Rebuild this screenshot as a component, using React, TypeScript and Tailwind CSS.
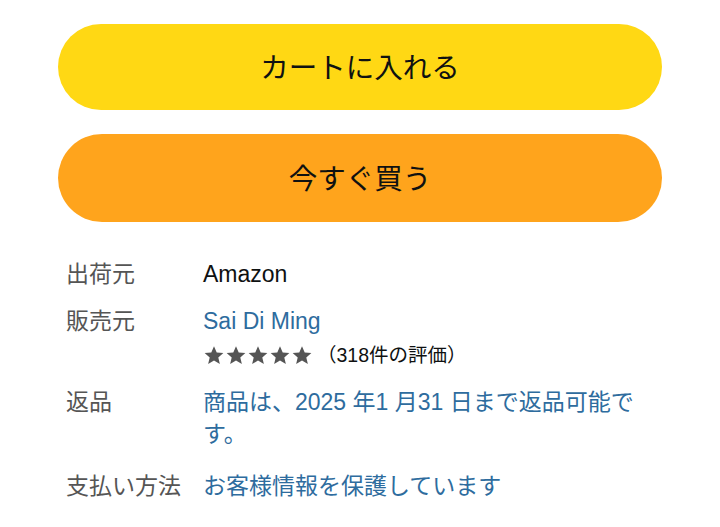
import React from "react";

const Star = () => (
  <svg width="22" height="21" viewBox="0 0 24 24" className="fill-[#555555]">
    <path d="M12 1.5l3.1 7 7.6.7-5.8 5 1.8 7.5L12 17.8l-6.7 3.9 1.8-7.5-5.8-5 7.6-.7z" />
  </svg>
);

export default function App() {
  const font = { fontFamily: "'Liberation Sans', 'Noto Sans CJK JP', sans-serif" };
  return (
    <div className="w-[720px] h-[527px] bg-white overflow-hidden" style={font}>
      <div className="px-[58px] pt-[24px] flex flex-col gap-[24px]">
        <button className="h-[86px] w-full rounded-full bg-[#FFD814] text-[#0F1111] text-[28.5px] pt-[3px]">
          カートに入れる
        </button>
        <button className="h-[88px] w-full rounded-full bg-[#FFA41C] text-[#0F1111] text-[28.5px] pt-[3px]">
          今すぐ買う
        </button>
      </div>
      <div className="pl-[66px] pr-[62px] pt-[36px] grid grid-cols-[137px_1fr] text-[23px] leading-[32px]">
        <div className="text-[#555555]">出荷元</div>
        <div className="text-[#0F1111]">Amazon</div>

        <div className="text-[#555555] mt-[15px]">販売元</div>
        <div className="mt-[15px]">
          <div className="text-[#2E6C9E]">Sai Di Ming</div>
          <div className="flex items-center h-[36px]">
            <div className="flex">
              <Star />
              <Star />
              <Star />
              <Star />
              <Star />
            </div>
            <span className="ml-[4px] text-[19.5px] text-[#0F1111]">（318件の評価）</span>
          </div>
        </div>

        <div className="text-[#555555] mt-[13px]">返品</div>
        <div className="text-[#2E6C9E] mt-[13px]">商品は、2025 年1 月31 日まで返品可能です。</div>

        <div className="text-[#555555] mt-[20px]">支払い方法</div>
        <div className="text-[#2E6C9E] mt-[20px]">お客様情報を保護しています</div>
      </div>
    </div>
  );
}
